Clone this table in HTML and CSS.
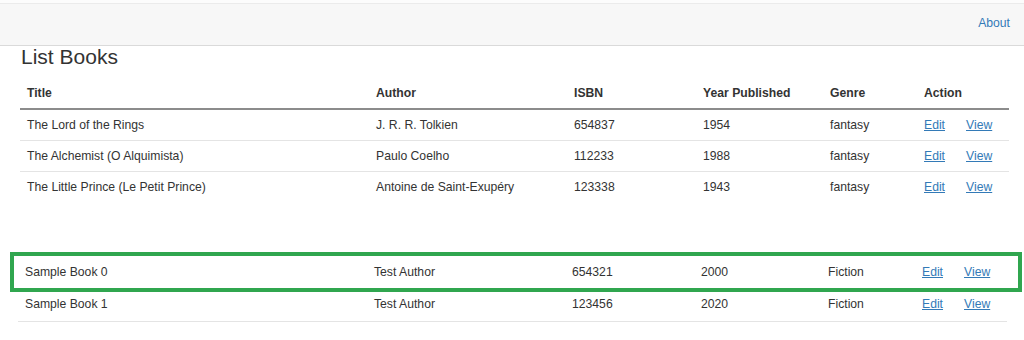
FILE: index.html
```html
<!DOCTYPE html>
<html lang="en">
<head>
<meta charset="utf-8">
<title>List Books</title>
<link rel="stylesheet" href="styles.css">
</head>
<body>
<div class="topstrip"></div>
<nav class="navbar">
  <a class="nav-link" href="#">About</a>
</nav>
<main class="container">
  <h2 class="page-title">List Books</h2>
  <table class="books">
    <colgroup>
      <col class="c-title"><col class="c-author"><col class="c-isbn"><col class="c-year"><col class="c-genre"><col class="c-action">
    </colgroup>
    <thead>
      <tr><th>Title</th><th>Author</th><th>ISBN</th><th>Year Published</th><th>Genre</th><th>Action</th></tr>
    </thead>
    <tbody>
      <tr><td>The Lord of the Rings</td><td>J. R. R. Tolkien</td><td>654837</td><td>1954</td><td>fantasy</td><td><a href="#">Edit</a><a class="view" href="#">View</a></td></tr>
      <tr><td>The Alchemist (O Alquimista)</td><td>Paulo Coelho</td><td>112233</td><td>1988</td><td>fantasy</td><td><a href="#">Edit</a><a class="view" href="#">View</a></td></tr>
      <tr><td>The Little Prince (Le Petit Prince)</td><td>Antoine de Saint-Exupéry</td><td>123338</td><td>1943</td><td>fantasy</td><td><a href="#">Edit</a><a class="view" href="#">View</a></td></tr>
    </tbody>
  </table>
  <div class="sample-wrap">
    <table class="books samples">
      <colgroup>
        <col class="c-title"><col class="c-author"><col class="c-isbn"><col class="c-year"><col class="c-genre"><col class="c-action">
      </colgroup>
      <tbody>
        <tr><td>Sample Book 0</td><td>Test Author</td><td>654321</td><td>2000</td><td>Fiction</td><td><a href="#">Edit</a><a class="view" href="#">View</a></td></tr>
        <tr><td>Sample Book 1</td><td>Test Author</td><td>123456</td><td>2020</td><td>Fiction</td><td><a href="#">Edit</a><a class="view" href="#">View</a></td></tr>
      </tbody>
    </table>
    <div class="highlight"></div>
  </div>
</main>
</body>
</html>
```
FILE: styles.css
```css
* { box-sizing: border-box; }

html, body {
  margin: 0;
  padding: 0;
  background: #ffffff;
}

body {
  font-family: "Liberation Sans", Arial, sans-serif;
  font-size: 12.2px;
  color: #333333;
}

.topstrip {
  height: 3px;
  background: #fcfcfc;
}

.navbar {
  height: 43px;
  background: #f7f7f7;
  border-top: 1px solid #ebebeb;
  border-bottom: 1px solid #dadada;
  display: flex;
  align-items: center;
  justify-content: flex-end;
  padding: 0 14px 3px 0;
}

.nav-link {
  color: #337ab7;
  text-decoration: none;
  font-size: 12.2px;
  line-height: 17px;
}

.container {
  padding: 0 15px 0 20px;
}

.page-title {
  margin: 0 0 9px 1px;
  font-size: 21px;
  font-weight: normal;
  line-height: 21px;
  color: #333333;
}

.books {
  width: 989px;
  border-collapse: collapse;
  table-layout: fixed;
}

.c-title { width: 349px; }
.c-author { width: 198px; }
.c-isbn { width: 129px; }
.c-year { width: 127px; }
.c-genre { width: 94px; }
.c-action { width: 92px; }

.books th {
  text-align: left;
  font-weight: bold;
  line-height: 17px;
  padding: 9px 7px 6px;
  border-bottom: 2px solid #8c8c8c;
  color: #333333;
}

.books td {
  line-height: 17px;
  padding: 7px 7px 6px;
  border-top: 1px solid #e4e4e4;
  white-space: nowrap;
}

.books tbody tr:first-child td {
  border-top: none;
}

.books a {
  color: #337ab7;
  text-decoration: underline;
}

.books a.view {
  margin-left: 21px;
}

.sample-wrap {
  position: relative;
  margin: 56px 0 0 -2px;
  width: 989px;
}

.samples td,
.samples tbody tr:first-child td {
  border-top: none;
  border-bottom: 1px solid #e4e4e4;
  padding: 6px 7px 8px;
}

.highlight {
  position: absolute;
  left: -8px;
  top: -6px;
  width: 1012px;
  height: 40px;
  border: 4px solid #30a64f;
  pointer-events: none;
}
```
